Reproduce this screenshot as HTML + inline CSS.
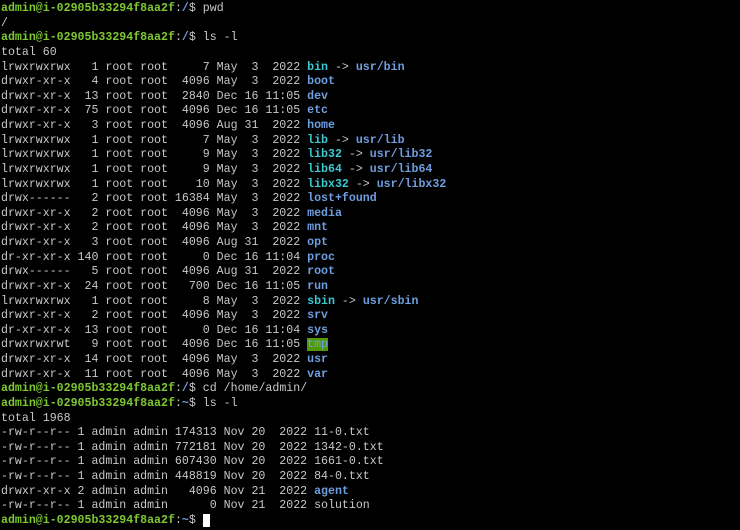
<!DOCTYPE html>
<html><head><meta charset="utf-8"><style>
html,body{margin:0;background:#000;width:740px;height:530px;overflow:hidden}
pre{margin:0;padding:2px 0 0 1px;font-family:"Liberation Mono",monospace;font-size:11.6px;line-height:14.63px;color:#c8c8c8}
.p{color:#7ec832;font-weight:bold}.b{color:#6f9ee0;font-weight:bold}.c{color:#3cc8d0;font-weight:bold}
.t{background:#4f9a00;color:#6f9ee0}
.cur{background:#fff;color:#fff}
</style></head><body><pre><span class="p">admin@i-02905b33294f8aa2f</span>:<span class="b">/</span>$ pwd
/
<span class="p">admin@i-02905b33294f8aa2f</span>:<span class="b">/</span>$ ls -l
total 60
lrwxrwxrwx   1 root root     7 May  3  2022 <span class="c">bin</span> -&gt; <span class="b">usr/bin</span>
drwxr-xr-x   4 root root  4096 May  3  2022 <span class="b">boot</span>
drwxr-xr-x  13 root root  2840 Dec 16 11:05 <span class="b">dev</span>
drwxr-xr-x  75 root root  4096 Dec 16 11:05 <span class="b">etc</span>
drwxr-xr-x   3 root root  4096 Aug 31  2022 <span class="b">home</span>
lrwxrwxrwx   1 root root     7 May  3  2022 <span class="c">lib</span> -&gt; <span class="b">usr/lib</span>
lrwxrwxrwx   1 root root     9 May  3  2022 <span class="c">lib32</span> -&gt; <span class="b">usr/lib32</span>
lrwxrwxrwx   1 root root     9 May  3  2022 <span class="c">lib64</span> -&gt; <span class="b">usr/lib64</span>
lrwxrwxrwx   1 root root    10 May  3  2022 <span class="c">libx32</span> -&gt; <span class="b">usr/libx32</span>
drwx------   2 root root 16384 May  3  2022 <span class="b">lost+found</span>
drwxr-xr-x   2 root root  4096 May  3  2022 <span class="b">media</span>
drwxr-xr-x   2 root root  4096 May  3  2022 <span class="b">mnt</span>
drwxr-xr-x   3 root root  4096 Aug 31  2022 <span class="b">opt</span>
dr-xr-xr-x 140 root root     0 Dec 16 11:04 <span class="b">proc</span>
drwx------   5 root root  4096 Aug 31  2022 <span class="b">root</span>
drwxr-xr-x  24 root root   700 Dec 16 11:05 <span class="b">run</span>
lrwxrwxrwx   1 root root     8 May  3  2022 <span class="c">sbin</span> -&gt; <span class="b">usr/sbin</span>
drwxr-xr-x   2 root root  4096 May  3  2022 <span class="b">srv</span>
dr-xr-xr-x  13 root root     0 Dec 16 11:04 <span class="b">sys</span>
drwxrwxrwt   9 root root  4096 Dec 16 11:05 <span class="t">tmp</span>
drwxr-xr-x  14 root root  4096 May  3  2022 <span class="b">usr</span>
drwxr-xr-x  11 root root  4096 May  3  2022 <span class="b">var</span>
<span class="p">admin@i-02905b33294f8aa2f</span>:<span class="b">/</span>$ cd /home/admin/
<span class="p">admin@i-02905b33294f8aa2f</span>:<span class="b">~</span>$ ls -l
total 1968
-rw-r--r-- 1 admin admin 174313 Nov 20  2022 11-0.txt
-rw-r--r-- 1 admin admin 772181 Nov 20  2022 1342-0.txt
-rw-r--r-- 1 admin admin 607430 Nov 20  2022 1661-0.txt
-rw-r--r-- 1 admin admin 448819 Nov 20  2022 84-0.txt
drwxr-xr-x 2 admin admin   4096 Nov 21  2022 <span class="b">agent</span>
-rw-r--r-- 1 admin admin      0 Nov 21  2022 solution
<span class="p">admin@i-02905b33294f8aa2f</span>:<span class="b">~</span>$ <span class="cur">_</span></pre></body></html>
